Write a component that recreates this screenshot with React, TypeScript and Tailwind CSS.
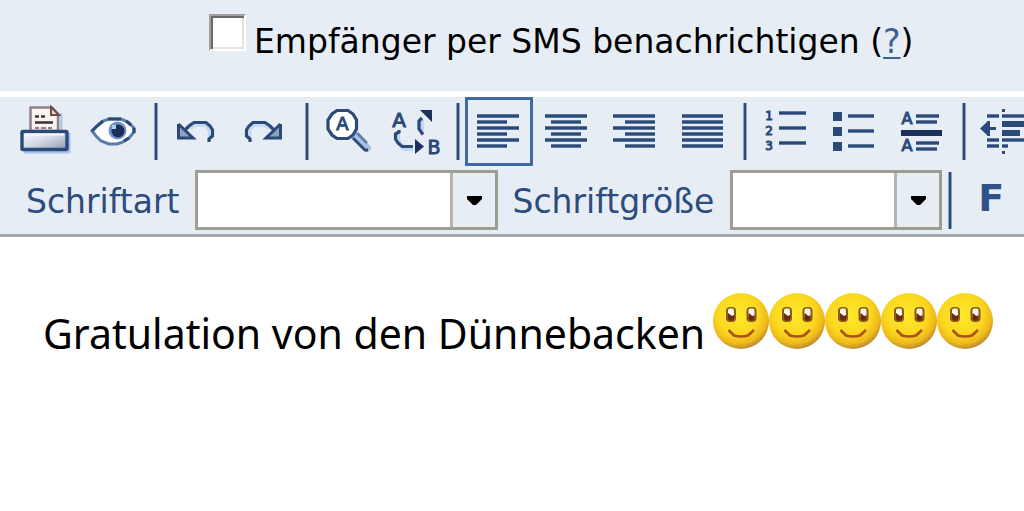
import React from 'react';

type IconProps = { children: React.ReactNode };

const NAVY = '#2b4a78';
const DARK = '#1b2f5b';

function Icon({ children }: IconProps) {
  return (
    <svg viewBox="0 0 62 63" className="block h-[63px] w-[62px]" fill="none" aria-hidden="true">
      {children}
    </svg>
  );
}

type ToolButtonProps = { label: string; active?: boolean; children: React.ReactNode };

function ToolButton({ label, active, children }: ToolButtonProps) {
  return (
    <button
      type="button"
      title={label}
      aria-label={label}
      aria-pressed={active}
      className={
        active
          ? 'w-[68px] shrink-0 border-[3px] border-[#4169a8]'
          : 'w-[68px] shrink-0 border-[3px] border-transparent hover:border-[#4169a8]'
      }
    >
      <Icon>{children}</Icon>
    </button>
  );
}

function Separator() {
  return <div className="mr-[5px] ml-[6px] h-[57px] w-1 shrink-0 border-x border-[#8fa3c0] bg-[#2b4a78]" />;
}

// Rows of [x1, x2, y]
function Lines({ rows }: { rows: number[][] }) {
  return (
    <g stroke={NAVY} strokeWidth="3.4" strokeLinecap="butt">
      {rows.map(([x1, x2, y]) => (
        <path key={`${x1}-${y}`} d={`M${x1} ${y}H${x2}`} />
      ))}
    </g>
  );
}

function Letter({ x, y, size, children }: { x: number; y: number; size: number; children: string }) {
  return (
    <text
      x={x}
      y={y}
      fontSize={size}
      textAnchor="middle"
      fill={NAVY}
      stroke={NAVY}
      strokeWidth="1"
      fontFamily="'DejaVu Sans', sans-serif"
    >
      {children}
    </text>
  );
}

function PrintIcon() {
  return (
    <>
      <defs>
        <linearGradient id="tray" x1="0" y1="0" x2="1" y2="1">
          <stop offset="0" stopColor="#ffffff" />
          <stop offset="0.5" stopColor="#d3d7e3" />
          <stop offset="1" stopColor="#8f98b4" />
        </linearGradient>
      </defs>
      <path d="M9 52H54V33" stroke="#a9c4f2" strokeWidth="3" strokeLinejoin="round" />
      <path d="M46 13V30" stroke="#b9c7e4" strokeWidth="3" />
      <path d="M15.500 31V7.500H37L43 14V31Z" fill="#fbf5ee" stroke="#8d8386" strokeWidth="2.500" />
      <path d="M36 7V15H44Z" fill="#f5d9c8" stroke="#6b4a4c" strokeWidth="2" />
      <path d="M20 16.500H24M26 16.500H30M20 22.500H38" stroke="#3a3034" strokeWidth="2.600" />
      <path d="M20 28H24M26 28H31M33 28H37" stroke="#8b8186" strokeWidth="2" />
      <rect x="7" y="31.500" width="45" height="18" rx="1" fill="url(#tray)" stroke={NAVY} strokeWidth="3.400" />
      <path d="M10 34.500H49" stroke="#f6f8fc" strokeWidth="2" />
    </>
  );
}

function EyeIcon() {
  return (
    <>
      <path
        d="M9 31L14 26L20 21L26 19H38L45 22L51 28V32L46 38L40 42L34 44H26L18 41L13 36Z"
        fill="#ffffff"
        stroke="#5a7eaa"
        strokeWidth="3"
      />
      <path d="M9 31L14 26L20 21M25 19H38M43 21L48 25M51 28V33M46 38L41 41" stroke={NAVY} strokeWidth="3" />
      <circle cx="34.500" cy="30.500" r="9" fill="#6f93c4" />
      <circle cx="35" cy="31" r="6.500" fill={DARK} />
      <rect x="29" y="25" width="4" height="4" fill="#b4cdf0" />
    </>
  );
}

function UndoIcon() {
  return (
    <>
      <path d="M24 29L29 25.500H39L43 30V37" stroke="#c3d6f5" strokeWidth="2.500" />
      <path d="M19 30L23 26L28 22.500H40L44 26L46.500 30V36L43 39V42" stroke={NAVY} strokeWidth="3.200" />
      <path d="M12.500 24V38H27L12.500 24" fill="#8fa3c0" stroke={NAVY} strokeWidth="3" />
    </>
  );
}

function FindIcon() {
  return (
    <>
      <path d="M38 36L50 48" stroke="#a8bfe8" strokeWidth="8" strokeLinecap="round" />
      <path d="M36 38L48 50H51" stroke={NAVY} strokeWidth="2.800" />
      <path d="M40 33L50 43" stroke="#5f7ca9" strokeWidth="2.500" />
      <path
        d="M20 10.500H31L36 14L39.500 20V29L36 35L31 38.500H20L15 35L11 29V20L15 14Z"
        fill="#ffffff"
        stroke={NAVY}
        strokeWidth="3.200"
      />
      <Letter x={25.5} y={30} size={18}>A</Letter>
    </>
  );
}

function ReplaceIcon() {
  return (
    <>
      <path d="M13 32V40L19 49H28M37 20V31" stroke="#c3d6f5" strokeWidth="4" />
      <path d="M14 30V32L10.500 34V39L13 43L17 46.500H28" stroke={NAVY} strokeWidth="3.200" />
      <path d="M37 18L34 21V29L38 34.500" stroke={NAVY} strokeWidth="3.200" />
      <path d="M35 10H47V22Z" fill={DARK} />
      <path d="M30 39V54L39 46.500Z" fill={DARK} />
      <Letter x={14} y={26.5} size={20}>A</Letter>
      <Letter x={49} y={53.5} size={19}>B</Letter>
    </>
  );
}

function OrderedListIcon() {
  return (
    <>
      <Letter x={14} y={20} size={12}>1</Letter>
      <Letter x={14} y={35} size={12}>2</Letter>
      <Letter x={14} y={50} size={12}>3</Letter>
      <Lines rows={[[24, 51, 13], [24, 51, 28], [24, 51, 43]]} />
    </>
  );
}

function BulletListIcon() {
  return (
    <>
      <path d="M10 12H19V21H10ZM10 27H19V36H10ZM10 42H19V51H10Z" fill={NAVY} />
      <Lines rows={[[25, 51, 16], [25, 51, 31], [25, 51, 46]]} />
    </>
  );
}

function RuleIcon() {
  return (
    <>
      <Letter x={16} y={24} size={16}>A</Letter>
      <Letter x={16} y={51} size={16}>A</Letter>
      <Lines rows={[[25, 48, 16], [25, 46, 22], [25, 48, 43], [25, 46, 49]]} />
      <path d="M10 30H51V36H10Z" fill={DARK} />
    </>
  );
}

function OutdentIcon() {
  return (
    <>
      <path d="M28 9H31V12H28ZM28 51H31V54H28ZM28 21H54V27H28ZM28 30H46V36H28Z" fill={NAVY} />
      <path d="M6 28.500L13 22V21H16V27H22V30H16V36H13V35Z" fill={NAVY} />
      <Lines rows={[[13, 25, 16], [28, 54, 16], [13, 25, 40], [28, 54, 40], [13, 25, 46], [28, 34, 46]]} />
    </>
  );
}

type FontSelectProps = { id: string; label: string; boxClass: string };

function FontSelect({ id, label, boxClass }: FontSelectProps) {
  return (
    <>
      <label htmlFor={id} className="shrink-0 pt-1 text-[33px] leading-10 text-[#2b4c7c]">
        {label}
      </label>
      <div className={`relative h-[60px] shrink-0 ${boxClass}`}>
        <select
          id={id}
          defaultValue=""
          className="block h-full w-full appearance-none border-[3px] border-[#9b9e90] bg-white pr-12 pl-2 text-2xl"
        >
          <option value=""></option>
        </select>
        <span className="pointer-events-none absolute inset-y-[3px] right-[3px] flex w-[45px] items-center justify-center border-l-[3px] border-[#b3b6a8] bg-[#e7edf5]">
          <svg viewBox="0 0 15 9" className="h-[9px] w-[15px]" aria-hidden="true">
            <path d="M0 0H15V3L9 9H6L0 3Z" fill="#000" />
          </svg>
        </span>
      </div>
    </>
  );
}

function Smiley() {
  return (
    <svg viewBox="0 0 56 56" className="h-14 w-14 shrink-0" role="img" aria-label="Smiley">
      <defs>
        <radialGradient id="face" cx="0.45" cy="0.38" r="0.62">
          <stop offset="0" stopColor="#ffe92e" />
          <stop offset="0.6" stopColor="#fbd81f" />
          <stop offset="0.85" stopColor="#efb81c" />
          <stop offset="1" stopColor="#b98a2c" />
        </radialGradient>
      </defs>
      <circle cx="28" cy="28" r="28" fill="url(#face)" />
      {[18, 38.5].map((x) => (
        <g key={x}>
          <rect x={x - 5} y="14" width="10" height="15" rx="4" fill="#8a5a14" />
          <rect x={x - 3} y="15.500" width="6" height="10" rx="2" fill="#fdf6ee" />
          <path d={`M${x - 3} 20L${x + 1} 23L${x + 3} 22V26L${x} 28L${x - 3} 26Z`} fill="#6b2a14" />
        </g>
      ))}
      <path d="M15.500 37L21 42.500Q28 44.500 35 42.500L41 37" fill="none" stroke="#a8521a" strokeWidth="2.600" />
    </svg>
  );
}

export default function App() {
  return (
    <main className="min-h-screen bg-white font-['DejaVu_Sans',Verdana,sans-serif]">
      <div className="flex h-[91px] items-start bg-[#e7edf5] pt-[14px] pl-[209px]">
        <input
          id="sms"
          type="checkbox"
          className="h-[37px] w-[37px] shrink-0 appearance-none border-2 border-t-[#a0a0a0] border-r-white border-b-white border-l-[#a0a0a0] bg-white shadow-[inset_2px_2px_0_#696969,inset_-2px_-2px_0_#e3e3e3] checked:bg-[#2b4a78]"
        />
        <p className="pt-2 pl-2 text-[33px] leading-10 whitespace-nowrap text-black">
          <label htmlFor="sms">Empfänger per SMS benachrichtigen</label> (
          <a href="#hilfe" className="text-[#3d6190] underline decoration-2 underline-offset-4">?</a>)
        </p>
      </div>

      <div className="mt-[6px] border-b-[3px] border-[#a3a9ae] bg-[#e7edf5]" role="toolbar" aria-label="Formatierung">
        <div className="flex items-center overflow-hidden pl-3">
          <ToolButton label="Drucken"><PrintIcon /></ToolButton>
          <ToolButton label="Vorschau"><EyeIcon /></ToolButton>
          <Separator />
          <ToolButton label="Rückgängig"><UndoIcon /></ToolButton>
          <ToolButton label="Wiederholen">
            <g transform="matrix(-1 0 0 1 59 0)"><UndoIcon /></g>
          </ToolButton>
          <Separator />
          <ToolButton label="Suchen"><FindIcon /></ToolButton>
          <ToolButton label="Ersetzen"><ReplaceIcon /></ToolButton>
          <Separator />
          <ToolButton label="Linksbündig" active>
            <Lines rows={[[9, 51, 16], [9, 39, 22], [9, 51, 28], [9, 39, 34], [9, 51, 40], [9, 39, 46]]} />
          </ToolButton>
          <ToolButton label="Zentriert">
            <Lines rows={[[9, 51, 16], [15, 45, 22], [9, 51, 28], [15, 45, 34], [9, 51, 40], [15, 45, 46]]} />
          </ToolButton>
          <ToolButton label="Rechtsbündig">
            <Lines rows={[[9, 51, 16], [21, 51, 22], [9, 51, 28], [21, 51, 34], [9, 51, 40], [21, 51, 46]]} />
          </ToolButton>
          <ToolButton label="Blocksatz">
            <Lines rows={[[10, 51, 16], [10, 51, 22], [10, 51, 28], [10, 51, 34], [10, 51, 40], [10, 51, 46]]} />
          </ToolButton>
          <Separator />
          <ToolButton label="Nummerierte Liste"><OrderedListIcon /></ToolButton>
          <ToolButton label="Aufzählung"><BulletListIcon /></ToolButton>
          <ToolButton label="Trennlinie"><RuleIcon /></ToolButton>
          <Separator />
          <ToolButton label="Einzug verkleinern"><OutdentIcon /></ToolButton>
        </div>

        <div className="flex h-[68px] items-center overflow-hidden pl-[26px]">
          <FontSelect id="font" label="Schriftart" boxClass="mr-[14px] ml-4 w-[303px]" />
          <FontSelect id="size" label="Schriftgröße" boxClass="ml-4 w-[212px]" />
          <Separator />
          <button
            type="button"
            title="Fett"
            className="h-[60px] w-[68px] shrink-0 pb-1 text-[38px] leading-10 font-bold text-[#2f5288]"
          >
            F
          </button>
        </div>
      </div>

      <div
        contentEditable
        suppressContentEditableWarning
        role="textbox"
        aria-label="Nachricht"
        className="flex items-start pt-14 pl-[43px] outline-none"
      >
        <p className="pt-2 pr-2 font-['Noto_Sans',sans-serif] text-[41px] leading-[64px] whitespace-nowrap text-black">
          Gratulation von den Dünnebacken
        </p>
        <Smiley />
        <Smiley />
        <Smiley />
        <Smiley />
        <Smiley />
      </div>
    </main>
  );
}
